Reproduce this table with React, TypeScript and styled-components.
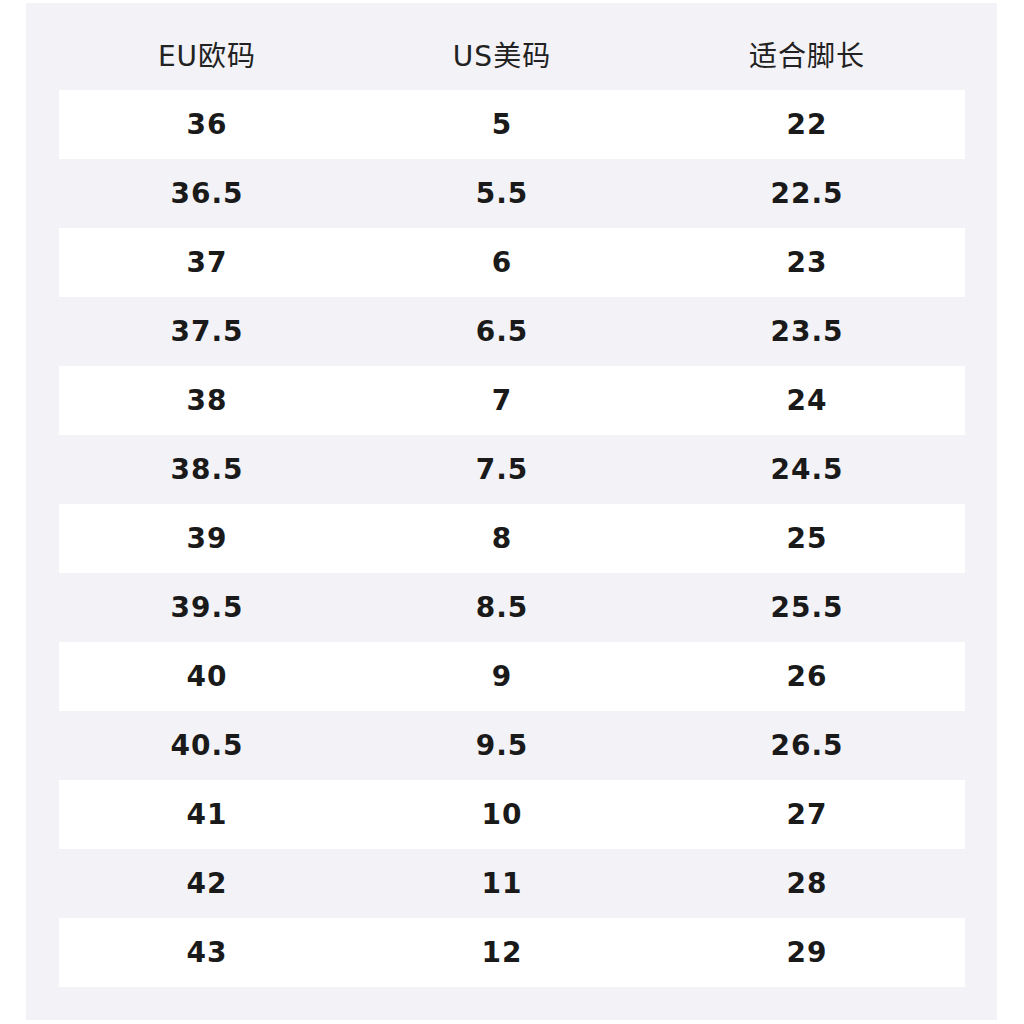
import React from "react";
import styled, { createGlobalStyle } from "styled-components";

const rows: [string, string, string][] = [
  ["36", "5", "22"],
  ["36.5", "5.5", "22.5"],
  ["37", "6", "23"],
  ["37.5", "6.5", "23.5"],
  ["38", "7", "24"],
  ["38.5", "7.5", "24.5"],
  ["39", "8", "25"],
  ["39.5", "8.5", "25.5"],
  ["40", "9", "26"],
  ["40.5", "9.5", "26.5"],
  ["41", "10", "27"],
  ["42", "11", "28"],
  ["43", "12", "29"],
];

const App = () => {
  return (
    <Page>
      <GlobalStyle />
      <Panel>
        <HeaderRow>
          <HeadCell>EU欧码</HeadCell>
          <HeadCell>US美码</HeadCell>
          <HeadCell>适合脚长</HeadCell>
        </HeaderRow>
        {rows.map((r, i) => (
          <Row key={r[0]} striped={i % 2 === 0}>
            {r.map((v, j) => (
              <Cell key={j}>{v}</Cell>
            ))}
          </Row>
        ))}
      </Panel>
    </Page>
  );
};

export default App;

const GlobalStyle = createGlobalStyle`
  body {
    margin: 0;
    background: #ffffff;
    font-family: "DejaVu Sans", "Noto Sans CJK SC", sans-serif;
  }
`;

const Page = styled.div`
  padding: 3px 27px 3px 26px;
`;

const Panel = styled.div`
  background-color: #f3f2f7;
  padding: 20px 32px 33px 33px;
  display: flex;
  flex-direction: column;
`;

const HeaderRow = styled.div`
  display: grid;
  grid-template-columns: 296px 294px 316px;
  height: 67px;
  align-items: center;
`;

const HeadCell = styled.div`
  text-align: center;
  font-size: 28px;
  letter-spacing: 1px;
  color: #222222;
  font-family: "DejaVu Sans", "Noto Sans CJK SC", sans-serif;
  padding-bottom: 6px;
`;

const Row = styled.div<{ striped: boolean }>`
  display: grid;
  grid-template-columns: 296px 294px 316px;
  height: 69px;
  align-items: center;
  background-color: ${(p) => (p.striped ? "#ffffff" : "transparent")};
`;

const Cell = styled.div`
  text-align: center;
  font-size: 28px;
  font-weight: 700;
  letter-spacing: 1px;
  color: #1a1a1a;
`;
